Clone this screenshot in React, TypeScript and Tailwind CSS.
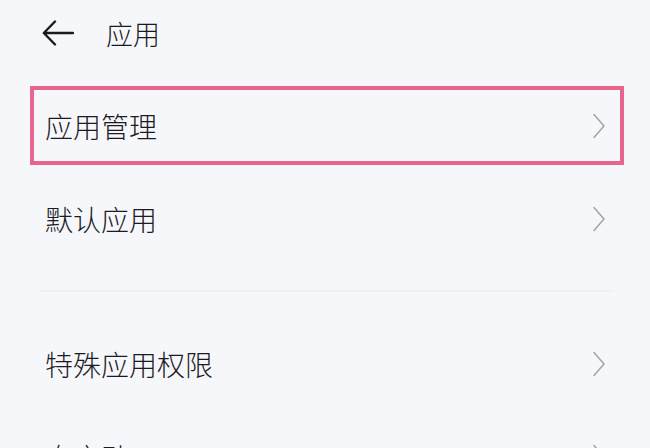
import React from "react";

const Chevron = () => (
  <svg width="14" height="26" viewBox="0 0 14 26" fill="none" className="shrink-0">
    <path d="M2 1.5 L12 13 L2 24.5" stroke="#a3a3a6" strokeWidth="1.5" strokeLinecap="round" strokeLinejoin="round" />
  </svg>
);

const Row = ({ label, highlighted, className = "" }: { label: string; highlighted?: boolean; className?: string }) => (
  <div
    className={
      "h-[79px] flex items-center justify-between " +
      (highlighted ? "border-4 border-[#e6668e] pl-[11px] pr-[14px] " : "pl-[15px] pr-[18px] ") +
      className
    }
  >
    <span className="text-[28px] leading-none font-light text-[#1c1c1e]">{label}</span>
    <Chevron />
  </div>
);

export default function App() {
  return (
    <div
      className="w-[650px] h-[448px] overflow-hidden bg-[#f6f7fb]"
      style={{ fontFamily: '"Noto Sans CJK SC", "Noto Sans", sans-serif' }}
    >
      <div className="h-[66px] flex items-center pl-[42px]">
        <svg width="32" height="26" viewBox="0 0 32 26" fill="none">
          <path d="M31 13 H2.5 M13 1.5 L1.8 13 L13 24.5" stroke="#1a1a1a" strokeWidth="2.4" strokeLinecap="round" strokeLinejoin="round" />
        </svg>
        <span className="ml-[32px] text-[27px] leading-none font-light text-[#1a1a1a]">应用</span>
      </div>
      <div className="pl-[30px] pr-[26px] pt-[20px]">
        <Row label="应用管理" highlighted />
        <Row label="默认应用" className="mt-[14px]" />
        <div className="mt-[32px] mx-[10px] h-[2px] bg-[#eef0f4]" />
        <Row label="特殊应用权限" className="mt-[32px]" />
        <Row label="自启动" className="mt-[14px]" />
      </div>
    </div>
  );
}
